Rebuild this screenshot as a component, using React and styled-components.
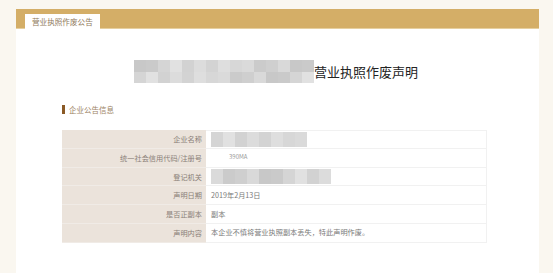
import React from "react";
import styled, { createGlobalStyle } from "styled-components";

const Global = createGlobalStyle`
  html, body {
    margin: 0;
    padding: 0;
    background: #faf7f0;
    font-family: "Noto Sans CJK SC", "Noto Sans", sans-serif;
  }
`;

const Page = styled.div`
  padding: 9px 14px 0 16px;
`;

const Card = styled.div`
  background: #fff;
  height: 264px;
`;

const TabBar = styled.div`
  height: 19px;
  background: #d4ae67;
  border-bottom: 1px solid #e6cf9f;
  display: flex;
  align-items: flex-end;
  padding-left: 9px;
`;

const Tab = styled.div`
  background: #fff;
  height: 15px;
  margin-bottom: -1px;
  padding: 0 7px;
  font-size: 7.6px;
  line-height: 15px;
  color: #8f7a5c;
`;

const Title = styled.h1`
  margin: 31px 0 0;
  display: flex;
  justify-content: center;
  align-items: center;
  font-size: 13px;
  font-weight: 400;
  color: #222;
  padding-right: 3px;
`;

const Mosaic = styled.div`
  display: grid;
  grid-template-columns: repeat(${(p) => p.cols}, ${(p) => p.cell}px);
  grid-auto-rows: ${(p) => p.rowH}px;
  filter: blur(0.5px);
`;

const Tile = styled.div`
  background: ${(p) => p.c};
`;

const Section = styled.div`
  margin: 21px 0 0 46px;
  display: flex;
  align-items: center;
  gap: 4px;
  font-size: 7.5px;
  color: #9d8466;
  &::before {
    content: "";
    width: 3px;
    height: 9px;
    background: #8a5a26;
  }
`;

const Table = styled.div`
  margin: 15px 0 0 46px;
  width: 425px;
  display: grid;
  grid-template-columns: 144px 1fr;
  font-size: 7.2px;
`;

const Label = styled.div`
  background: #ebe3db;
  color: #8a8078;
  text-align: right;
  padding-right: 4px;
  height: 18.8px;
  line-height: 18.8px;
  border-bottom: 1px solid #f0ebe6;
  box-sizing: border-box;
`;

const Value = styled.div`
  color: #7a7a7a;
  padding-left: 5px;
  height: 18.8px;
  line-height: 18.8px;
  border: 1px solid #f1f1f1;
  border-top: none;
  border-left: none;
  box-sizing: border-box;
  display: flex;
  align-items: center;
  &:nth-child(2) {
    border-top: 1px solid #f1f1f1;
  }
`;

const Faint = styled.span`
  color: #9a9a9a;
  font-size: 6px;
  margin-left: 18px;
`;

const greys = ["#d2d2d2", "#d9d9d9", "#dedede", "#d5d5d5", "#cbcbcb", "#dcdcdc", "#c8c8c8", "#d7d7d7", "#e1e1e1", "#cfcfcf", "#d3d3d3", "#cacaca", "#dadada"];

const tiles = (n, seed) =>
  Array.from({ length: n }, (_, i) => greys[(i * 5 + seed * 3) % greys.length]);

const MosaicBlock = ({ cols, rows, cell, rowH, seed }) => (
  <Mosaic cols={cols} cell={cell} rowH={rowH}>
    {tiles(cols * rows, seed).map((c, i) => (
      <Tile key={i} c={c} />
    ))}
  </Mosaic>
);

const rows = [
  ["企业名称", <MosaicBlock cols={8} rows={1} cell={12} rowH={15} seed={1} />],
  ["统一社会信用代码/注册号", <Faint>390MA</Faint>],
  ["登记机关", <MosaicBlock cols={10} rows={1} cell={12} rowH={15} seed={4} />],
  ["声明日期", "2019年2月13日"],
  ["是否正副本", "副本"],
  ["声明内容", "本企业不慎将营业执照副本丢失，特此声明作废。"],
];

const App = () => (
  <>
    <Global />
    <Page>
      <Card>
        <TabBar>
          <Tab>营业执照作废公告</Tab>
        </TabBar>
        <Title>
          <MosaicBlock cols={15} rows={2} cell={12} rowH={11.5} seed={2} />
          营业执照作废声明
        </Title>
        <Section>企业公告信息</Section>
        <Table>
          {rows.map(([k, v]) => (
            <React.Fragment key={k}>
              <Label>{k}</Label>
              <Value>{v}</Value>
            </React.Fragment>
          ))}
        </Table>
      </Card>
    </Page>
  </>
);

export default App;
